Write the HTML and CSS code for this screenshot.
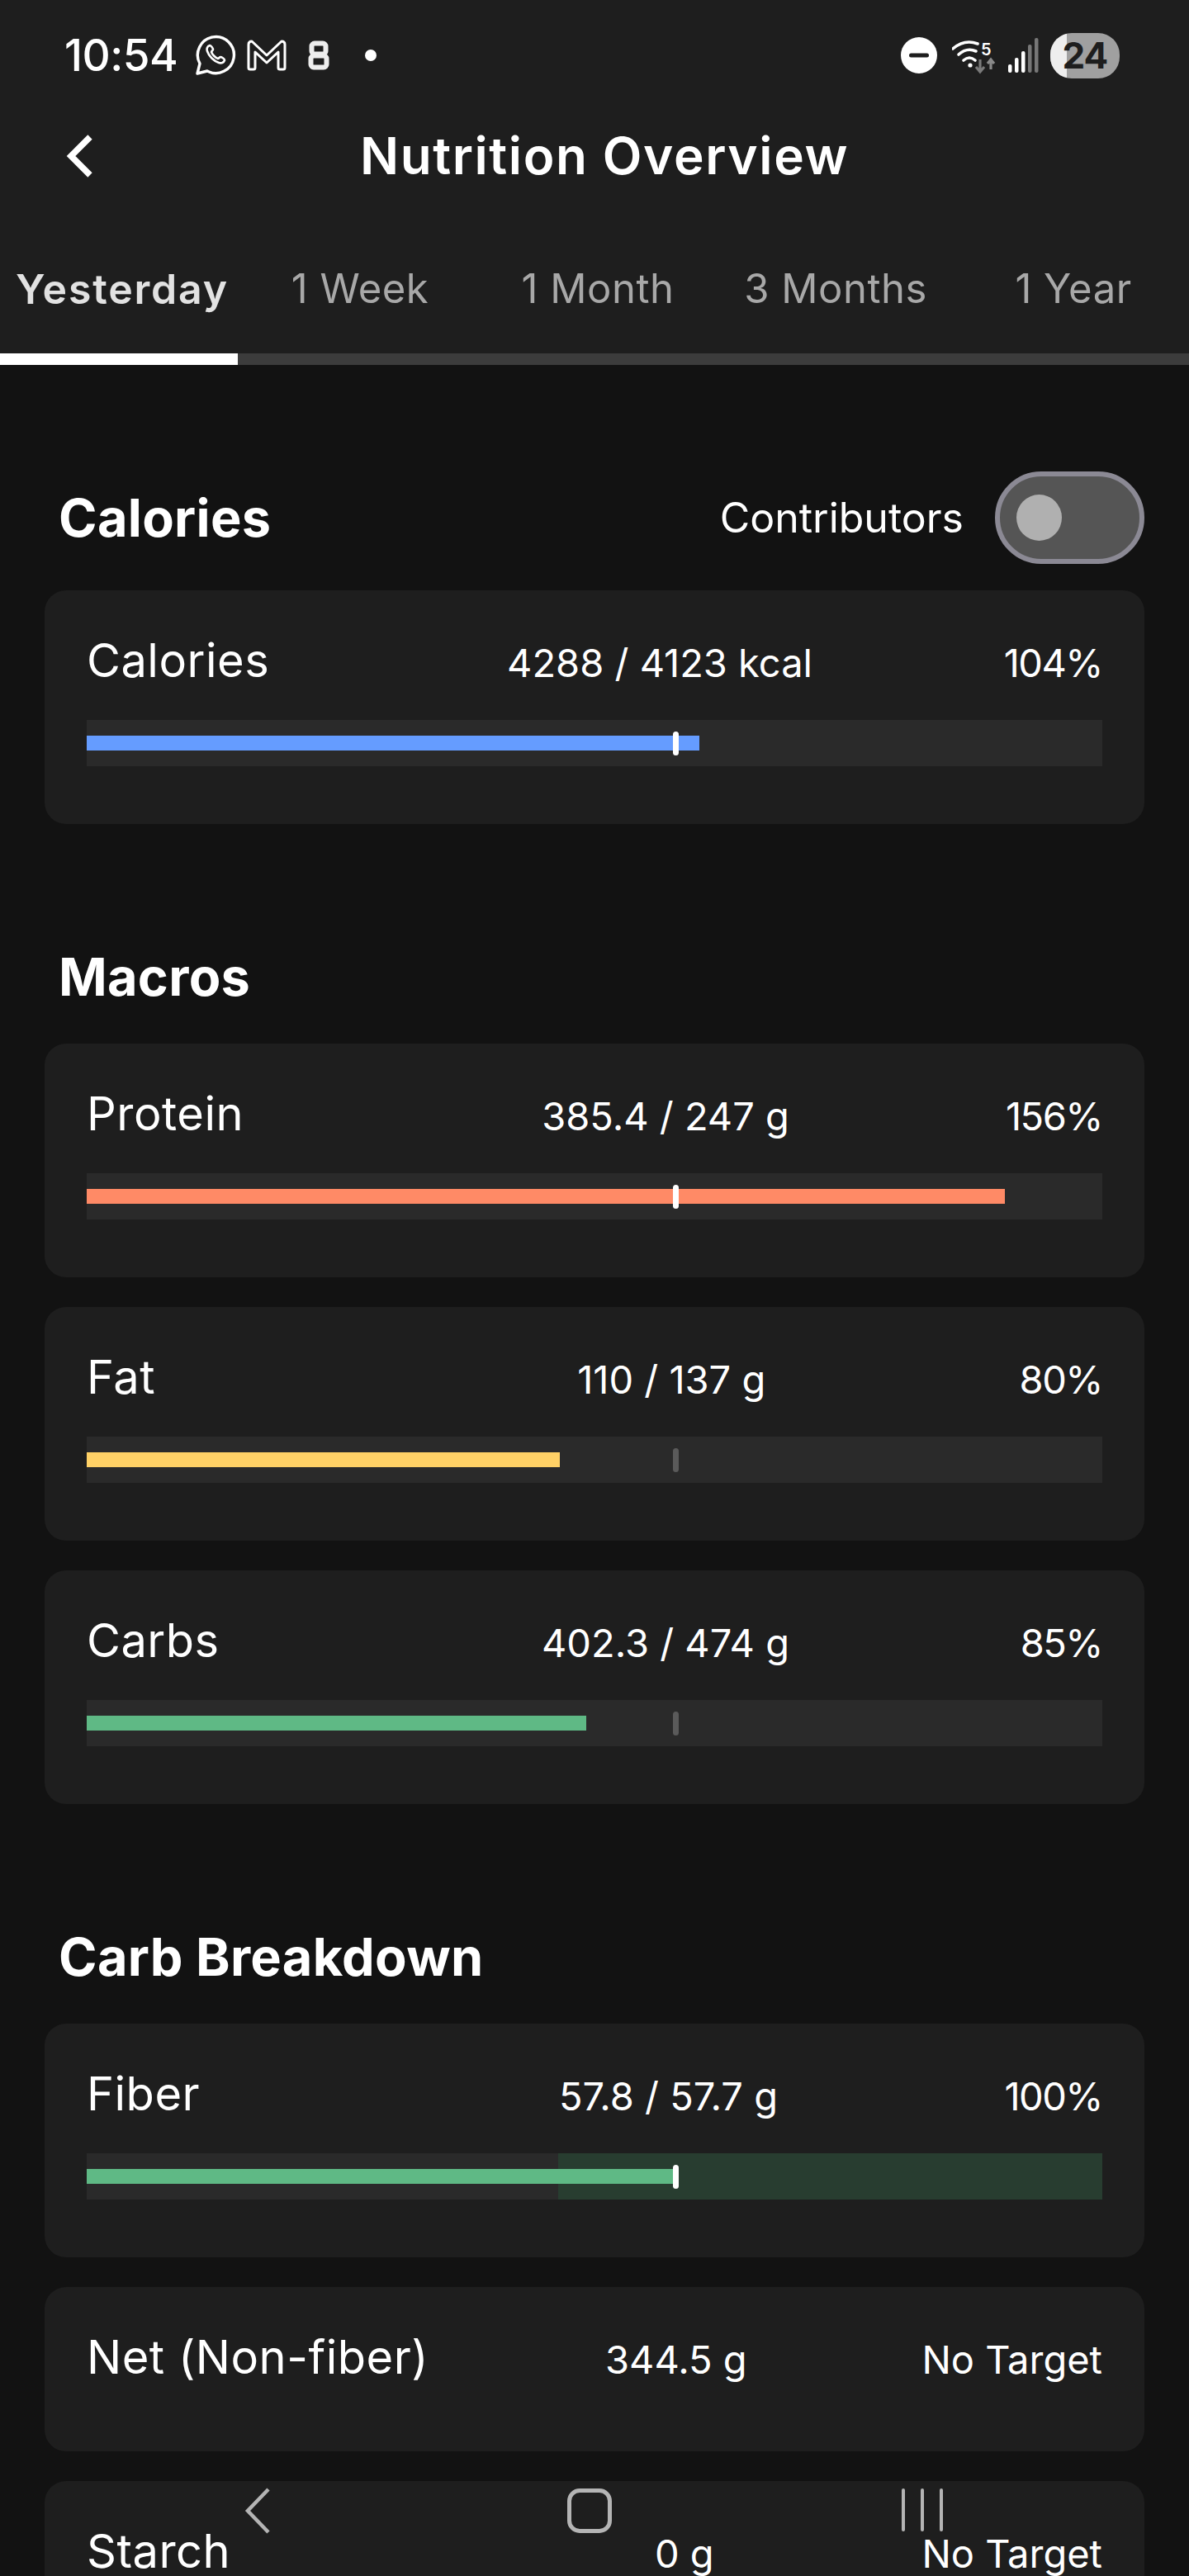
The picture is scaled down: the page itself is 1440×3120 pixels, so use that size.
FILE: index.html
```html
<!DOCTYPE html>
<html lang="en">
<head>
<meta charset="utf-8">
<title>Nutrition Overview</title>
<link rel="stylesheet" href="styles.css">
</head>
<body>
<div class="screen">
  <header class="top">
    <div class="status">
      <div class="status-left">
        <span class="time">10:54</span>
        <svg class="ic-wa" viewBox="0 0 50 50"><path d="M3 47l3-12A22 22 0 1 1 15 44z" fill="none" stroke="#fff" stroke-width="3.4" stroke-linejoin="round"/><path d="M18 13c-3 1-4 4-3 7 2 6 8 12 14 14 3 1 6 0 7-3 0-2-4-4-5-4s-2 2-3 2c-3-1-7-5-8-8 0-1 2-2 2-3s-2-5-4-5z" fill="none" stroke="#fff" stroke-width="2.6" stroke-linejoin="round"/></svg>
        <svg class="ic-m" viewBox="0 0 48 38"><path d="M2 6q0-4 4-4l18 17L42 2q4 0 4 4v28q0 2-2 2h-4q-2 0-2-2V15L24 28 10 15v19q0 2-2 2H4q-2 0-2-2z" fill="none" stroke="#fff" stroke-width="3" stroke-linejoin="round"/></svg>
        <svg class="ic-8" viewBox="0 0 26 36"><rect x="4.5" y="3.5" width="17" height="13" rx="3.5" fill="none" stroke="#eee" stroke-width="6"/><rect x="3.500" y="18.500" width="19" height="14" rx="3.5" fill="none" stroke="#eee" stroke-width="6"/></svg>
        <span class="dot"></span>
      </div>
      <div class="status-right">
        <svg class="ic-dnd" viewBox="0 0 44 44"><circle cx="22" cy="22" r="22" fill="#fff"/><rect x="10" y="19.500" width="24" height="5" rx="2.500" fill="#1e1e1e"/></svg>
        <svg class="ic-wifi" viewBox="0 0 56 46"><g fill="none" stroke="#fff" stroke-width="3.6" stroke-linecap="round"><path d="M1 15Q15 3 31 9"/><path d="M8 22Q18 13 29 18"/><path d="M14 29Q21 23 28 29"/></g><circle cx="22" cy="35" r="2.600" fill="#fff"/><text x="35" y="23" class="wifi5">5</text><g fill="none" stroke="#7a7a7a" stroke-width="3.200"><path d="M34 28v15M29 37l5 6 5-6"/><path d="M47 40V28M43 33l4-5 4 5" stroke="#8a8a8a"/></g></svg>
        <svg class="ic-sig" viewBox="0 0 38 42"><g fill="#fff"><rect x="0" y="32" width="4.500" height="10" rx="2"/><rect x="8" y="24" width="4.500" height="18" rx="2"/><rect x="16" y="16" width="4.500" height="26" rx="2"/></g><g fill="#777"><rect x="24" y="8" width="4.500" height="34" rx="2"/><rect x="32" y="0" width="4.500" height="42" rx="2"/></g></svg>
        <div class="battery"><span class="battery-fill"></span><span class="battery-num">24</span></div>
      </div>
    </div>
    <div class="titlebar">
      <svg class="back" viewBox="0 0 34 54"><path d="M29 4 6 27l23 23" fill="none" stroke="#fff" stroke-width="7.500"/></svg>
      <h1 class="title">Nutrition Overview</h1>
    </div>
    <nav class="tabs">
      <span class="tab active">Yesterday</span>
      <span class="tab">1 Week</span>
      <span class="tab">1 Month</span>
      <span class="tab">3 Months</span>
      <span class="tab">1 Year</span>
    </nav>
    <div class="tabline"><span class="tabline-on"></span></div>
  </header>

  <main class="content">
    <section class="section first">
      <div class="section-head">
        <h2 class="section-title">Calories</h2>
        <div class="contrib">
          <span class="contrib-label">Contributors</span>
          <span class="toggle"><span class="knob"></span></span>
        </div>
      </div>
      <div class="card">
        <div class="row"><span class="label">Calories</span><span class="val-cell"><span class="val">4288 / 4123 kcal</span></span><span class="pct num">104%</span></div>
        <div class="track"><span class="fill blue" style="width:742px"></span><span class="mark on"></span></div>
      </div>
    </section>

    <section class="section">
      <div class="section-head"><h2 class="section-title">Macros</h2></div>
      <div class="card">
        <div class="row"><span class="label">Protein</span><span class="val-cell"><span class="val">385.4 / 247 g</span></span><span class="pct num">156%</span></div>
        <div class="track"><span class="fill orange" style="width:1112px"></span><span class="mark on"></span></div>
      </div>
      <div class="card">
        <div class="row"><span class="label">Fat</span><span class="val-cell"><span class="val">110 / 137 g</span></span><span class="pct num">80%</span></div>
        <div class="track"><span class="fill yellow" style="width:573px"></span><span class="mark"></span></div>
      </div>
      <div class="card">
        <div class="row"><span class="label">Carbs</span><span class="val-cell"><span class="val">402.3 / 474 g</span></span><span class="pct num">85%</span></div>
        <div class="track"><span class="fill green" style="width:605px"></span><span class="mark"></span></div>
      </div>
    </section>

    <section class="section">
      <div class="section-head"><h2 class="section-title">Carb Breakdown</h2></div>
      <div class="card">
        <div class="row"><span class="label">Fiber</span><span class="val-cell"><span class="val">57.8 / 57.7 g</span></span><span class="pct num">100%</span></div>
        <div class="track"><span class="range"></span><span class="fill green" style="width:714px"></span><span class="mark on"></span></div>
      </div>
      <div class="card short">
        <div class="row"><span class="label">Net (Non-fiber)</span><span class="val-cell"><span class="val">344.5 g</span></span><span class="pct">No Target</span></div>
      </div>
      <div class="card short">
        <div class="row"><span class="label">Starch</span><span class="val-cell"><span class="val">0 g</span></span><span class="pct">No Target</span></div>
      </div>
    </section>
  </main>

  <div class="sysnav">
    <svg class="nav-back" viewBox="0 0 32 56"><path d="M29 2 4 28l25 26" fill="none" stroke="#b4b4b4" stroke-width="4.500"/></svg>
    <span class="nav-home"></span>
    <span class="nav-recent"><span class="nav-line"></span><span class="nav-line"></span><span class="nav-line"></span></span>
  </div>
</div>
</body>
</html>
```
FILE: styles.css
```css
* { box-sizing: border-box; }
html, body { margin: 0; padding: 0; background: #121212; }
.screen { position: relative; width: 1440px; height: 3120px; overflow: hidden; background: #121212; color: #fff; font-family: Inter, "Noto Sans", sans-serif; }
h1, h2 { margin: 0; }

.top { background: #1e1e1e; height: 442px; display: flex; flex-direction: column; }
.status { height: 134px; padding: 39px 84px 0 78px; display: flex; justify-content: space-between; align-items: flex-start; }
.status-left, .status-right { display: flex; align-items: center; height: 56px; }
.time { font-size: 53px; font-weight: 500; letter-spacing: -0.5px; line-height: 56px; width: 158px; }
.ic-wa { width: 50px; height: 50px; margin-right: 13px; }
.ic-m { width: 48px; height: 38px; margin-right: 26px; }
.ic-8 { width: 26px; height: 36px; margin-right: 43px; }
.dot { width: 14px; height: 14px; border-radius: 50%; background: #fff; }
.ic-dnd { width: 44px; height: 44px; margin-right: 18px; }
.ic-wifi { width: 56px; height: 46px; margin-right: 12px; }
.ic-sig { width: 38px; height: 42px; margin-right: 13px; }
.wifi5 { font-size: 20px; font-weight: 600; fill: #fff; font-family: Inter, sans-serif; }
.battery { position: relative; width: 84px; height: 55px; border-radius: 26px; background: #a0a0a0; overflow: hidden; display: flex; align-items: center; justify-content: center; }
.battery-fill { position: absolute; left: 0; top: 0; bottom: 0; width: 20px; background: #eeeeee; }
.battery-num { position: relative; color: #1e1e1e; font-size: 44px; font-weight: 700; letter-spacing: -1px; line-height: 50px; }

.titlebar { height: 110px; padding-left: 80px; display: flex; align-items: center; }
.back { width: 34px; height: 54px; }
.title { font-size: 62px; font-weight: 600; letter-spacing: 1.6px; line-height: 72px; margin-left: 322px; white-space: nowrap; }

.tabs { display: grid; grid-template-columns: repeat(5, 288px); padding: 77px 0 0 4px; height: 184px; align-content: start; }
.tab { text-align: center; font-size: 49px; letter-spacing: 0.5px; line-height: 58px; color: #a8a8a8; white-space: nowrap; }
.tab.active { color: #e2e2e2; font-size: 50px; letter-spacing: 1.8px; font-weight: 600; }
.tabline { height: 14px; background: #3c3c3c; }
.tabline-on { display: block; width: 288px; height: 14px; background: #fff; }

.content { padding: 0 54px; }
.section { padding-top: 113px; }
.section.first { padding-top: 129px; }
.section-head { height: 72px; margin: 0 0 45px 17px; display: flex; justify-content: space-between; align-items: center; }
.first .section-head { height: 112px; margin-bottom: 32px; }
.section-title { font-size: 63px; font-weight: 700; letter-spacing: 0.3px; line-height: 72px; }
.contrib { display: flex; align-items: center; gap: 38px; }
.contrib-label { font-size: 50px; }
.toggle { width: 181px; height: 112px; border-radius: 56px; background: #555; border: 6px solid #8b8994; display: flex; align-items: center; padding-left: 20px; }
.knob { width: 55px; height: 56px; border-radius: 50%; background: #b0b0b0; }

.card { background: #1e1e1e; border-radius: 26px; height: 283px; padding: 0 51px; margin-bottom: 36px; }
.card.short { height: 199px; }
.row { display: grid; grid-template-columns: 731px 1fr auto; align-items: baseline; height: 157px; padding-top: 55px; white-space: nowrap; }
.label { font-size: 56px; font-weight: 400; letter-spacing: 0.5px; line-height: 60px; }
.val-cell { display: block; font-size: 47px; line-height: 56px; }
.val { display: inline-block; transform: translateX(-60%); }
.pct { font-size: 47px; line-height: 56px; text-align: right; }
.pct.num { letter-spacing: -1.5px; }

.track { position: relative; height: 56px; background: #2a2a2a; }
.fill { position: absolute; left: 0; top: 19px; height: 18px; }
.blue { background: #659cff; }
.orange { background: #ff8a66; }
.yellow { background: #ffd166; }
.green { background: #5fb985; }
.range { position: absolute; left: 571px; right: 0; top: 0; bottom: 0; background: #283d30; }
.mark { position: absolute; left: 710px; top: 14px; width: 7px; height: 29px; border-radius: 4px; background: #5a5a5a; }
.mark.on { background: #fff; }

.sysnav { position: absolute; left: 0; right: 0; top: 3013px; height: 56px; }
.nav-back { position: absolute; left: 296px; top: 0; width: 32px; height: 56px; }
.nav-home { position: absolute; left: 687px; top: 1px; width: 54px; height: 54px; border: 5px solid #b4b4b4; border-radius: 15px; }
.nav-recent { position: absolute; left: 1092px; top: 1px; height: 52px; display: flex; gap: 19px; }
.nav-line { width: 4px; height: 52px; background: #b4b4b4; border-radius: 2px; }
```
